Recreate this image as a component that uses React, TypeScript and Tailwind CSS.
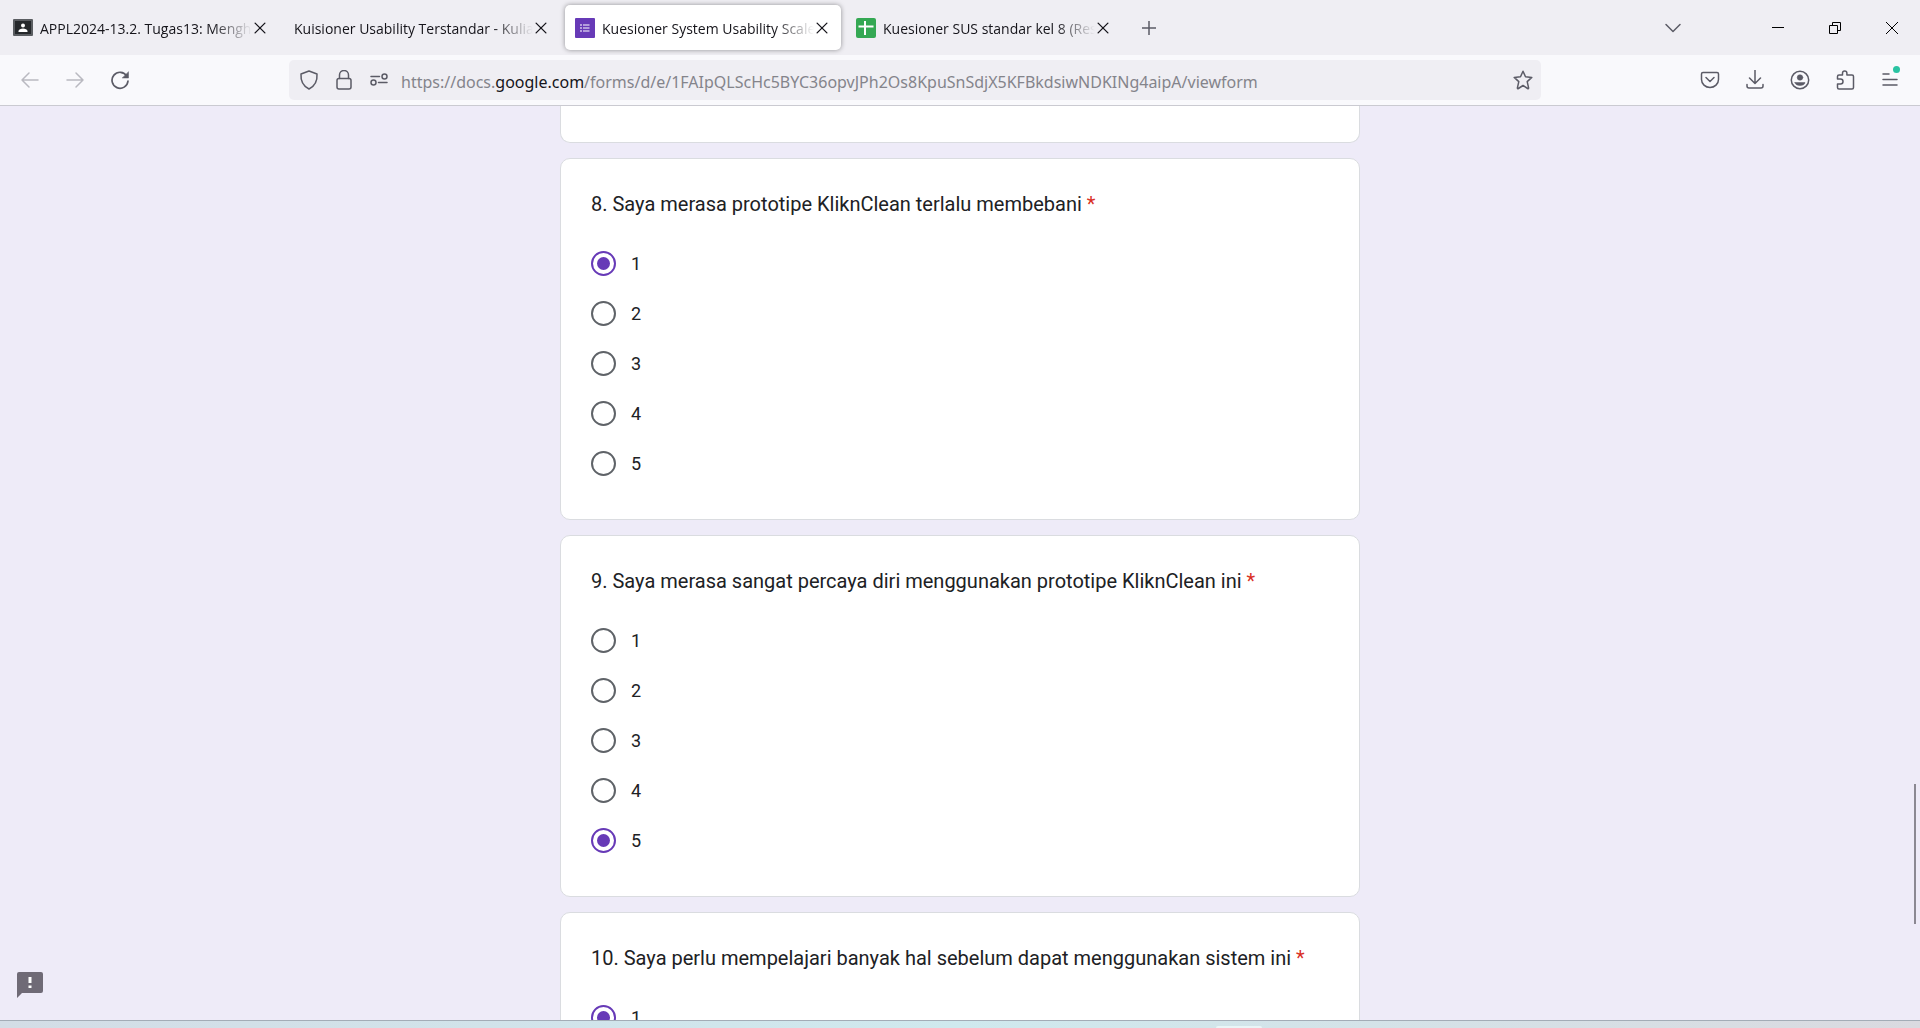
import React, { useState } from "react";

type IconProps = { children: React.ReactNode; className?: string };

function Icon({ children, className = "size-5" }: IconProps) {
  return (
    <svg
      viewBox="0 0 20 20"
      className={className}
      fill="none"
      stroke="currentColor"
      strokeWidth="1.5"
      strokeLinecap="round"
      strokeLinejoin="round"
      aria-hidden="true"
    >
      {children}
    </svg>
  );
}

function ClassroomIcon() {
  return (
    <svg viewBox="0 0 20 17" className="h-[17px] w-5 shrink-0" aria-hidden="true">
      <rect width="20" height="17" rx="1" fill="#5a5d61" />
      <rect x="2" y="2" width="16" height="13" fill="#25282b" />
      <circle cx="10" cy="6.5" r="2" fill="#fff" />
      <path d="M5.5 13v-1c0-1.600 2.500-2.500 4.500-2.500s4.500.9 4.500 2.500v1z" fill="#fff" />
    </svg>
  );
}

function FormsIcon() {
  return (
    <svg viewBox="0 0 20 20" className="size-5 shrink-0" aria-hidden="true">
      <rect width="20" height="20" rx="1" fill="#673ab7" />
      <path d="M8 7h6.500M8 10h6.500M8 13h6.500" stroke="#fff" strokeWidth="1.200" />
      <path d="M5.300 7h1.400M5.300 10h1.400M5.300 13h1.400" stroke="#fff" strokeWidth="1.400" />
    </svg>
  );
}

function SheetsIcon() {
  return (
    <svg viewBox="0 0 20 20" className="size-5 shrink-0" aria-hidden="true">
      <rect width="20" height="20" rx="2" fill="#34a853" />
      <path d="M9 3v14M2.500 8.500h15" stroke="#fff" strokeWidth="2" />
    </svg>
  );
}

type Tab = { title: string; icon?: React.ReactNode; active?: boolean };

const tabs: Tab[] = [
  { title: "APPL2024-13.2. Tugas13: Menghitung", icon: <ClassroomIcon /> },
  { title: "Kuisioner Usability Terstandar - Kuliah" },
  { title: "Kuesioner System Usability Scale", icon: <FormsIcon />, active: true },
  { title: "Kuesioner SUS standar kel 8 (Responses)", icon: <SheetsIcon /> },
];

function BrowserTab({ title, icon, active }: Tab) {
  return (
    <div
      className={
        "flex h-[45px] w-[276px] items-center rounded-[5px] pl-2.5 pr-3 text-[#15141a] " +
        (active ? "bg-white shadow-[0_0_5px_rgba(0,0,0,0.4)]" : "")
      }
    >
      {icon && <span className="mr-[7px] flex">{icon}</span>}
      <button
        role="tab"
        aria-selected={!!active}
        className="min-w-0 flex-1 overflow-hidden whitespace-nowrap pt-0.5 text-left [mask-image:linear-gradient(to_left,transparent,black_40px)]"
      >
        {title}
      </button>
      <button aria-label={"Close " + title} className="flex w-[15px] justify-center">
        <Icon className="size-3.5 shrink-0">
          <path d="M3 3l14 14M17 3L3 17" strokeWidth="1.900" />
        </Icon>
      </button>
    </div>
  );
}

function TabStrip() {
  return (
    <header className="flex h-[55px] shrink-0 items-center bg-[#efeef3] pl-[3px] text-[#5b5b66]">
      <div role="tablist" className="flex gap-[5px] text-sm">
        {tabs.map((tab) => (
          <BrowserTab key={tab.title} {...tab} />
        ))}
      </div>
      <button aria-label="New tab" className="ml-[17px] flex">
        <Icon>
          <path d="M10 3v14M3 10h14" strokeLinecap="butt" />
        </Icon>
      </button>
      <div className="ml-auto flex items-center">
        <button aria-label="List all tabs" className="mr-[66px] flex">
          <Icon>
            <path d="M3 6.500l7 7 7-7" />
          </Icon>
        </button>
        <div className="flex text-black">
          {[
            ["Minimize", "M4 9.500h12"],
            ["Restore", "M4.500 7.500h8v8h-8zM7.500 7.500v-3h8v8h-3"],
            ["Close window", "M4 4l12 12M16 4L4 16"],
          ].map(([label, d]) => (
            <button key={label} aria-label={label} className="flex w-[57px] justify-center">
              <Icon>
                <path d={d} strokeWidth="1" strokeLinecap="butt" strokeLinejoin="miter" />
              </Icon>
            </button>
          ))}
        </div>
      </div>
    </header>
  );
}

function Toolbar() {
  return (
    <nav className="flex h-[51px] shrink-0 items-center border-b border-[#cacad1] bg-[#f9f9fc] text-[#5b5b66]">
      <div className="flex w-[289px] shrink-0 gap-[25px] pl-5">
        <button aria-label="Back" disabled className="text-[#b9b9c0]">
          <Icon>
            <path d="M18 10H2M9 3l-7 7 7 7" />
          </Icon>
        </button>
        <button aria-label="Forward" disabled className="text-[#b9b9c0]">
          <Icon>
            <path d="M2 10h16M11 3l7 7-7 7" />
          </Icon>
        </button>
        <button aria-label="Reload">
          <Icon>
            <path d="M16.800 6A8 8 0 1 0 18 11" strokeWidth="1.700" />
            <path d="M18.500 2v6h-6z" fill="currentColor" strokeWidth="0.500" />
          </Icon>
        </button>
      </div>
      <div className="flex h-10 min-w-0 flex-1 items-center rounded-[5px] bg-[#efeef3] pl-2.5 pr-2">
        <div className="mr-3 flex gap-[15px]">
          <button aria-label="Tracking protection">
            <Icon>
              <path d="M10 1l8 3c.5 7-2 12-8 15C4 16 1.500 11 2 4z" />
            </Icon>
          </button>
          <button aria-label="Site security">
            <Icon>
              <rect x="3" y="8.500" width="14" height="10.500" rx="2" />
              <path d="M5.500 8.500V5a4.500 4.500 0 0 1 9 0v3.500" />
            </Icon>
          </button>
          <button aria-label="Permissions">
            <Icon>
              <circle cx="15.500" cy="6.500" r="2.500" />
              <circle cx="4.500" cy="12.500" r="2.500" />
              <path d="M2 6.500h8.500M9.500 12.500H18" />
            </Icon>
          </button>
        </div>
        <a
          href="#form"
          className="min-w-0 flex-1 overflow-hidden whitespace-nowrap pt-1 font-['Noto_Sans',sans-serif] text-base text-[#84848b]"
        >
          https://docs.<span className="text-[#15141a]">google.com</span>
          /forms/d/e/1FAIpQLScHc5BYC36opvJPh2Os8KpuSnSdjX5KFBkdsiwNDKINg4aipA/viewform
        </a>
        <button aria-label="Bookmark">
          <Icon>
            <path d="M10 1.200l2.500 5.500 6.300.7-4.600 4.200 1.400 6.200c.1.700-.4 1-1 .7L10 15.500l-4.600 3c-.6.300-1.100 0-1-.7l1.400-6.200L1.200 7.400l6.300-.7z" />
          </Icon>
        </button>
      </div>
      <div className="flex w-[379px] shrink-0 items-center justify-end gap-[25px] pr-5">
        <button aria-label="Save to Pocket">
          <Icon>
            <path d="M3 2.500h14c1 0 1.500.6 1.500 1.500v5.500a8.500 8 0 0 1-17 0V4c0-.9.500-1.500 1.500-1.500z" />
            <path d="M6 7.500l4 4 4-4" />
          </Icon>
        </button>
        <button aria-label="Downloads">
          <Icon>
            <path d="M10 0v13M4.500 8l5.500 5.500L15.500 8M2 14.500v1.500c0 1.300.7 2 2 2h12c1.300 0 2-.7 2-2v-1.500" />
          </Icon>
        </button>
        <button aria-label="Account">
          <Icon>
            <circle cx="10" cy="10" r="8.700" />
            <circle cx="10" cy="7.500" r="2.800" fill="currentColor" strokeWidth="0.500" />
            <path d="M5 12.500h10c0 1.700-2.200 3-5 3s-5-1.300-5-3z" fill="currentColor" strokeWidth="0.500" />
          </Icon>
        </button>
        <button aria-label="Extensions">
          <Icon>
            <path d="M2.500 8.500V6.500C2.500 5.600 3.100 5 4 5h3.500V3.200a2.200 2.200 0 0 1 4.400 0V5H17c.9 0 1.500.6 1.500 1.500v11c0 .9-.6 1.500-1.500 1.500H4c-.9 0-1.500-.6-1.500-1.500V14h3a2.500 2.500 0 0 0 0-5h-3z" />
          </Icon>
        </button>
        <button aria-label="Menu" className="relative">
          <Icon>
            <path d="M3 4h6M3 9.500h14M3 15h14" />
          </Icon>
          <span className="absolute -top-1 left-[13px] size-[7px] rounded-full bg-[#2ac3a2]" />
        </button>
      </div>
    </nav>
  );
}

type Question = { id: string; text: string; answer: string };

const questions: Question[] = [
  { id: "q8", text: "8. Saya merasa prototipe KliknClean terlalu membebani", answer: "1" },
  { id: "q9", text: "9. Saya merasa sangat percaya diri menggunakan prototipe KliknClean ini", answer: "5" },
  { id: "q10", text: "10. Saya perlu mempelajari banyak hal sebelum dapat menggunakan sistem ini", answer: "1" },
];

const scale = ["1", "2", "3", "4", "5"];

function QuestionCard({ id, text, answer }: Question) {
  const [value, setValue] = useState(answer);
  return (
    <section
      role="radiogroup"
      aria-labelledby={id}
      className="shrink-0 rounded-[10px] border border-[#dadce0] bg-white p-[30px]"
    >
      <h2 id={id} className="mb-5 text-xl leading-[30px]">
        {text} <span className="text-[#d93025]">*</span>
      </h2>
      {scale.map((n) => (
        <label key={n} className="flex h-[50px] w-fit items-start gap-[15px] pt-3 text-lg leading-[26px]">
          <input
            type="radio"
            name={id}
            value={n}
            checked={value === n}
            onChange={() => setValue(n)}
            className="grid size-[25px] appearance-none place-content-center rounded-full border-2 border-[#5f6368] before:size-[13px] before:rounded-full checked:border-[#673ab7] checked:before:bg-[#673ab7]"
          />
          {n}
        </label>
      ))}
    </section>
  );
}

export default function App() {
  return (
    <div className="flex h-screen flex-col overflow-hidden font-['Open_Sans','Noto_Sans',sans-serif]">
      <TabStrip />
      <Toolbar />
      <main
        id="form"
        className="relative min-h-0 flex-1 overflow-hidden bg-[#eeebf8] font-[Roboto,sans-serif] text-[#202124]"
      >
        <form className="mx-auto flex w-full max-w-[800px] flex-col gap-[15px]">
          <div className="h-[37px] rounded-b-[10px] border border-t-0 border-[#dadce0] bg-white" />
          {questions.map((q) => (
            <QuestionCard key={q.id} {...q} />
          ))}
        </form>
        <button aria-label="Report a problem" className="absolute bottom-[22px] left-[17px]">
          <svg viewBox="0 0 26 26" className="size-[26px]" aria-hidden="true">
            <path d="M2 0h22a2 2 0 0 1 2 2v17a2 2 0 0 1-2 2H5l-5 5V2a2 2 0 0 1 2-2z" fill="#6f6a76" />
            <path d="M11.500 5h3v6h-3zM11.500 13.500h3v2.500h-3z" fill="#fff" />
          </svg>
        </button>
        <div className="absolute bottom-24 right-1 h-[140px] w-0.5 bg-[#8b8892]" />
      </main>
      <footer className="flex h-2 shrink-0 items-end border-t border-[#a3acb6] bg-linear-to-r from-[#d3dde6] via-[#cfe9ee] to-[#dadae0]">
        <div className="ml-[1216px] h-0.5 w-[46px] rounded-t-sm bg-[#e9f5f7]" />
      </footer>
    </div>
  );
}
